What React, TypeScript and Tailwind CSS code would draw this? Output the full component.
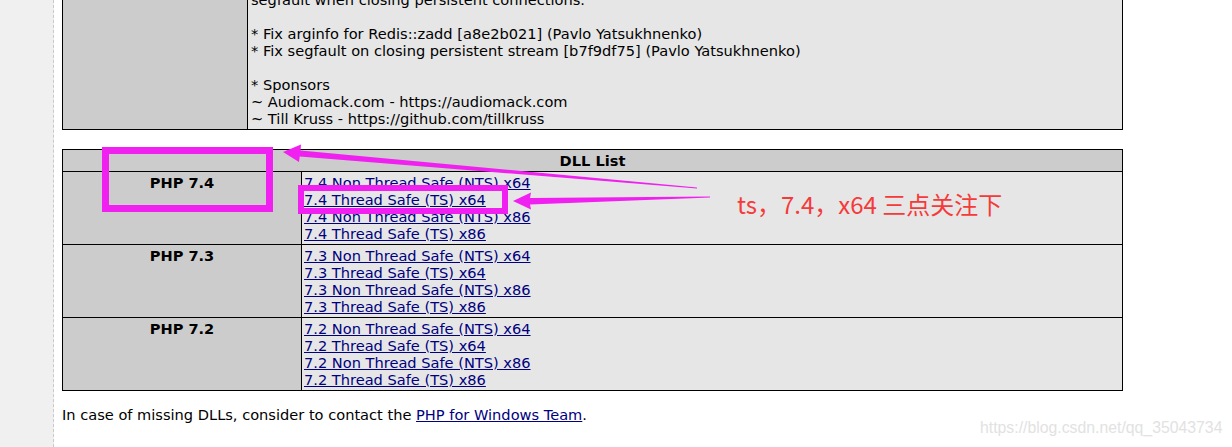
const versions = ["7.4", "7.3", "7.2"];

const builds = (v: string) => [
  `${v} Non Thread Safe (NTS) x64`,
  `${v} Thread Safe (TS) x64`,
  `${v} Non Thread Safe (NTS) x86`,
  `${v} Thread Safe (TS) x86`,
];

const notes = [
  "segfault when closing persistent connections.",
  "",
  "* Fix arginfo for Redis::zadd [a8e2b021] (Pavlo Yatsukhnenko)",
  "* Fix segfault on closing persistent stream [b7f9df75] (Pavlo Yatsukhnenko)",
  "",
  "* Sponsors",
  "~ Audiomack.com - https://audiomack.com",
  "~ Till Kruss - https://github.com/tillkruss",
];

function Annotations() {
  return (
    <>
      <svg className="pointer-events-none absolute left-0 top-0" width={1232} height={447}>
        <rect x={105.5} y={150.5} width={164} height={58} fill="none" stroke="#f020f0" strokeWidth={7} />
        <rect x={301} y={188} width={204} height={23} fill="none" stroke="#f020f0" strokeWidth={6} />
        <polygon
          fill="#f020f0"
          points="283,152 301,144.5 300.5,150.5 697,187.5 697,188.5 299.7,156.5 299,162"
        />
        <polygon
          fill="#f020f0"
          points="513,201 531,192.5 530,198 710,196.5 710,197.5 530,204.5 531,209.5"
        />
      </svg>
      <div className="absolute left-[737px] top-[188px] whitespace-nowrap font-[family-name:'Noto_Sans_CJK_SC',sans-serif] text-[24px] leading-[32px] text-[#f53a3a]">
        ts，7.4，x64 三点关注下
      </div>
      <div className="absolute left-[980px] top-[418px] whitespace-nowrap font-[family-name:'Liberation_Sans',sans-serif] text-[15.8px] leading-[20px] text-[#e2e2e2]">
        https://blog.csdn.net/qq_35043734
      </div>
    </>
  );
}

export default function App() {
  return (
    <div className="relative flex h-[447px] w-[1232px] overflow-hidden bg-white font-[family-name:'DejaVu_Sans',sans-serif] text-[14.6px] leading-[17px] text-black">
      <div className="w-[54px] shrink-0 border-r border-dashed border-[#c9c9c9] bg-[#f0f0f0]" />

      <div className="ml-[8px] w-[1061px] shrink-0">
        {/* changelog tail */}
        <div className="mt-[-9px] grid grid-cols-[185px_1fr] border border-t-0 border-black">
          <div className="border-r border-black bg-[#cccccc]" />
          <div className="bg-[#e6e6e6] pb-[2px] pl-[3px]">
            {notes.map((line, i) => (
              <div key={i} className="h-[17px] whitespace-pre">
                {line}
              </div>
            ))}
          </div>
        </div>

        {/* DLL list */}
        <div className="mt-[19px] border border-black">
          <div className="border-b border-black bg-[#cccccc] py-[2px] text-center font-bold">DLL List</div>
          {versions.map((v, i) => (
            <div
              key={v}
              className={`grid grid-cols-[239px_1fr] ${i < versions.length - 1 ? "border-b border-black" : ""}`}
            >
              <div className="border-r border-black bg-[#cccccc] py-[2px] text-center font-bold">PHP {v}</div>
              <div className="bg-[#e6e6e6] py-[2px] pl-[2px]">
                {builds(v).map((b) => (
                  <div key={b} className="h-[17px]">
                    <a href="#" className="text-[#000080] underline">
                      {b}
                    </a>
                  </div>
                ))}
              </div>
            </div>
          ))}
        </div>

        <p className="mt-[15px]">
          In case of missing DLLs, consider to contact the{" "}
          <a href="#" className="text-[#000080] underline">
            PHP for Windows Team
          </a>
          .
        </p>
      </div>

      <Annotations />
    </div>
  );
}
